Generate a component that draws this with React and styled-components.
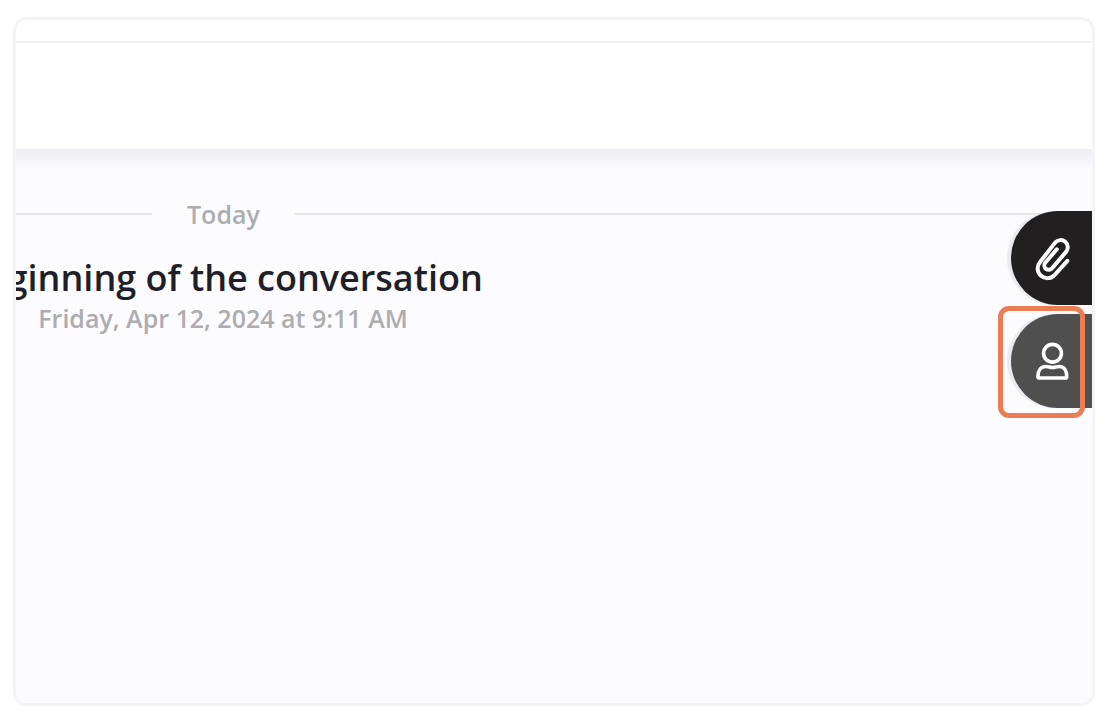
import React from 'react'
import { useState } from 'react';
import styled, { createGlobalStyle } from "styled-components";


function App() {

    const [panel, setPanel] = useState('contact');

    return (
        <>
            <GlobalStyle />
            <Page>
                <Frame>
                    <TopBar />
                    <Header />
                    <Conversation>
                        <DayDivider>
                            <ShortRule />
                            <DayLabel>Today</DayLabel>
                            <LongRule />
                        </DayDivider>
                        <Intro>
                            <Title>Beginning of the conversation</Title>
                            <Started>Friday, Apr 12, 2024 at 9:11 AM</Started>
                        </Intro>
                        <SideTabs>
                            <TabSlot>
                                <SideTab aria-label="Attachments" $color="#221f20" onClick={() => setPanel('files')}>
                                    <ClipIcon />
                                </SideTab>
                            </TabSlot>
                            <TabSlot>
                                <SideTab aria-label="Contact" $color="#4f4f4f" onClick={() => setPanel('contact')}>
                                    <PersonIcon />
                                </SideTab>
                                {panel === 'contact' && <Highlight />}
                            </TabSlot>
                        </SideTabs>
                    </Conversation>
                </Frame>
            </Page>
        </>
    )
}

export default App;

function ClipIcon() {
    return (
        <svg width="37" height="45" viewBox="0 0 110 136" fill="none" stroke="#fff" strokeWidth="12" strokeLinecap="round" strokeLinejoin="round">
            <path d="M100 75 L61 118 A29 29 0 0 1 18 78 L63 20 A21 21 0 0 1 96 48 L54 97 A13 13 0 0 1 33 81 L68 40" />
        </svg>
    )
}

function PersonIcon() {
    return (
        <svg width="37" height="41" viewBox="0 0 110 124" fill="none" stroke="#fff" strokeWidth="11" strokeLinejoin="round">
            <circle cx="55" cy="37" r="27" />
            <path d="M16 112 H94 Q98 112 98 107 C98 88 89 77 75 77 C67 77 63 80 55 80 C47 80 43 77 35 77 C21 77 11 88 11 107 Q11 112 16 112 Z" />
        </svg>
    )
}

const GlobalStyle = createGlobalStyle`
    * {
        box-sizing: border-box;
    }
    body {
        margin: 0;
        background: #fff;
        font-family: "Open Sans", "Noto Sans", sans-serif;
    }
`

const Page = styled.main`
    display: flex;
    min-height: 100vh;
    padding: 17px 19px 14px 13px;
`

const Frame = styled.section`
    display: flex;
    flex-direction: column;
    flex: 1;
    min-width: 0;
    overflow: hidden;
    background: #fcfbff;
    border: 3px solid #f4f3f6;
    border-radius: 14px;
`

const TopBar = styled.div`
    height: 23px;
    background: #fff;
    border-bottom: 2px solid #f0eff2;
`

const Header = styled.header`
    height: 106px;
    background: #fff;
`

const Conversation = styled.div`
    position: relative;
    flex: 1;
    padding-top: 48px;
    background: linear-gradient(#efeef3, #f1f0f5 6px, #fcfbff 20px);
`

const DayDivider = styled.div`
    display: flex;
    align-items: center;
    gap: 35px;
    height: 34px;
`

const ShortRule = styled.span`
    width: 136px;
    height: 2px;
    background: #e5e4e9;
`

const LongRule = styled.span`
    flex: 1;
    height: 2px;
    background: #e5e4e9;
`

const DayLabel = styled.span`
    font-size: 25px;
    line-height: 32px;
    font-weight: 600;
    color: #adadb0;
`

const Intro = styled.div`
    display: flex;
    flex-direction: column;
    align-items: center;
    width: 414px;
    padding-top: 25px;
    white-space: nowrap;
`

const Title = styled.h1`
    margin: 0;
    font-size: 36px;
    line-height: 44px;
    font-weight: 600;
    color: #1f1f29;
`

const Started = styled.time`
    font-size: 25px;
    line-height: 36px;
    font-weight: 600;
    color: #adadb0;
`

/* tabs stick to the right edge, over the messages */
const SideTabs = styled.nav`
    position: absolute;
    top: 62px;
    right: 0;
    display: flex;
    flex-direction: column;
    gap: 9px;
`

const TabSlot = styled.div`
    position: relative;
`

const SideTab = styled.button`
    display: flex;
    align-items: center;
    width: 81px;
    height: 94px;
    padding: 0 0 0 23px;
    border: 0;
    border-radius: 47px 0 0 47px;
    background: ${props => props.$color};
    box-shadow: -4px 0 1px #ebebef;
    cursor: pointer;
`

const Highlight = styled.span`
    position: absolute;
    top: -8px;
    right: 7px;
    bottom: -10px;
    left: -13px;
    border: 5px solid #e97d54;
    border-radius: 11px;
    pointer-events: none;
`
